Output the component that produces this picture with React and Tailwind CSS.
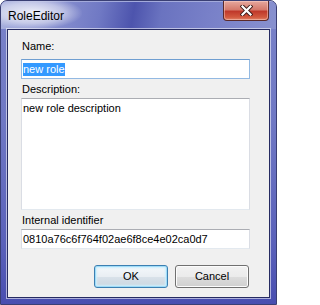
import React from 'react';

// Win7 style dialog: RoleEditor
function TextBox({ children, focused, className = '' }) {
  return (
    <div
      className={
        'ml-[13px] w-[229px] border bg-white pl-[1px] text-[11px] leading-[13px] text-black ' +
        (focused
          ? 'border-[#93b9e2] border-t-[#6f9ed1] '
          : 'border-[#dadde4] border-t-[#abadb3] border-b-[#e3e9ef] ') +
        className
      }
    >
      {children}
    </div>
  );
}

function CloseGlyph() {
  return (
    <svg width="13" height="11" viewBox="0 0 13 11">
      <path d="M2.5 1.5 L10.5 9.5 M10.5 1.5 L2.5 9.5" stroke="#3b1a18" strokeWidth="4" strokeLinecap="square" />
      <path d="M2.5 1.5 L10.5 9.5 M10.5 1.5 L2.5 9.5" stroke="#ffffff" strokeWidth="2.2" strokeLinecap="square" />
    </svg>
  );
}

export default function App() {
  return (
    <div className="w-[277px] h-[305px] bg-white font-['Liberation_Sans',Arial,sans-serif]">
      <div className="flex flex-col w-[277px] h-[305px] rounded-t-[7px] border border-[#3a3f74] overflow-hidden bg-[linear-gradient(180deg,#7a83c9_0%,#6f78c4_40%,#5a61ba_80%,#484eb0_100%)]">
        {/* title bar */}
        <div className="flex justify-between items-start h-[28px] border-t border-[#a3aadb] bg-[linear-gradient(100deg,#a9b1de_0%,#8890d0_20%,#7079c4_36%,#4d54ad_48%,#6a73c0_58%,#7880c8_75%,#8891cf_100%)]">
          <div className="mt-[-5px] h-[32px] pl-[7px] pr-[18px] pt-[12px] bg-[radial-gradient(ellipse_at_40%_50%,rgba(255,255,255,0.85)_0%,rgba(255,255,255,0.45)_45%,rgba(255,255,255,0)_72%)]">
            <span className="block text-[12px] leading-[14px] text-black">RoleEditor</span>
          </div>
          <div className="mt-[-1px] mr-[7px] flex items-center justify-center w-[46px] h-[20px] rounded-b-[4px] border border-t-0 border-[#5b2a2a] bg-[linear-gradient(180deg,#e6a89e_0%,#d57a6c_45%,#c0392b_55%,#d2593f_85%,#e0856a_100%)] shadow-[inset_0_0_0_1px_rgba(255,220,210,0.45)]">
            <CloseGlyph />
          </div>
        </div>

        {/* client area */}
        <div className="mx-[6px] h-[269px] flex flex-col border border-[#262b62] bg-[#f0f0f0] shadow-[0_0_0_1px_rgba(255,255,255,0.55)]">
          <div className="mt-[10px] ml-[14px] h-[13px] text-[11px] leading-[13px] text-black">Name:</div>
          <TextBox focused className="mt-[6px] h-[20px] flex items-center">
            <span className="bg-[#3399ff] text-white">new role</span>
          </TextBox>

          <div className="mt-[4px] ml-[14px] h-[13px] text-[11px] leading-[13px] text-black">Description:</div>
          <TextBox className="mt-[2px] h-[112px] pt-[3px]">new role description</TextBox>

          <div className="mt-[4px] ml-[14px] h-[13px] text-[11px] leading-[13px] text-black">Internal identifier</div>
          <TextBox className="mt-[2px] h-[20px] flex items-center">0810a76c6f764f02ae6f8ce4e02ca0d7</TextBox>

          <div className="mt-[16px] ml-[13px] w-[228px] flex justify-end gap-[7px]">
            <button className="w-[74px] h-[23px] rounded-[3px] border border-[#3c7fb1] text-[11px] text-black bg-[linear-gradient(180deg,#f4f8fb_0%,#e9eef3_50%,#d9e2ea_50%,#cbd6e0_100%)] shadow-[inset_0_0_0_1px_#9fdcf8,inset_0_0_2px_2px_#cdeefc]">
              OK
            </button>
            <button className="w-[74px] h-[23px] rounded-[3px] border border-[#707070] text-[11px] text-black bg-[linear-gradient(180deg,#f2f2f2_0%,#ebebeb_50%,#dddddd_50%,#cfcfcf_100%)] shadow-[inset_0_0_0_1px_#fcfcfc]">
              Cancel
            </button>
          </div>
        </div>
      </div>
    </div>
  );
}
